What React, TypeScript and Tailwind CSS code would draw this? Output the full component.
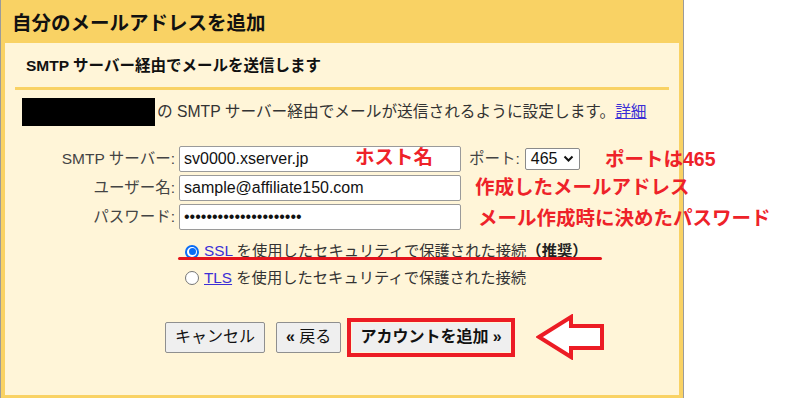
import React from "react";

const FONT = "font-['Liberation_Sans','Noto_Sans_CJK_JP',sans-serif]";

function Radio({ checked }: { checked?: boolean }) {
  return checked ? (
    <span className="w-[14px] h-[14px] rounded-full border-2 border-[#0a6cf5] bg-white flex items-center justify-center shrink-0">
      <span className="w-[7px] h-[7px] rounded-full bg-[#0a6cf5]" />
    </span>
  ) : (
    <span className="w-[14px] h-[14px] rounded-full border border-[#767676] bg-white shrink-0" />
  );
}

function Field({ label, children }: { label: string; children: React.ReactNode }) {
  return (
    <div className="flex items-center h-[26px]">
      <div className="w-[172px] text-right text-[15.5px] text-[#444] pr-[2px]">{label}</div>
      {children}
    </div>
  );
}

function TextBox({ value }: { value: string }) {
  return (
    <div className="w-[282px] h-[26px] ml-[2px] bg-white border border-[#9a9a9a] rounded-[2px] flex items-center px-[4px] text-[16px] text-[#111] leading-none overflow-hidden whitespace-nowrap">
      {value}
    </div>
  );
}

export default function App() {
  return (
    <div className={`relative w-[800px] h-[398px] bg-white overflow-hidden ${FONT}`}>
      {/* dialog frame */}
      <div className="w-[684px] h-full bg-[#f9d264] border-l border-r border-[#9b9b9b] flex flex-col">
        <div className="h-[43px] flex items-center pl-[11px] pt-[4px] text-[19.5px] font-bold text-[#111]">
          自分のメールアドレスを追加
        </div>
        <div className="flex-1 mx-[4px] mb-[3px] bg-[#fff5d8] flex flex-col">
          <div className="h-[44px] flex items-center pl-[21px] pt-[2px] text-[15.5px] font-bold text-[#111]">
            SMTP サーバー経由でメールを送信します
          </div>
          <div className="mx-[10px] h-[3px] bg-[#f9d264]" />

          {/* info line */}
          <div className="flex items-center mt-[8px] pl-[17px] h-[28px] text-[15.7px] text-[#333] whitespace-nowrap">
            <div className="w-[133px] h-[28px] bg-black" />
            <span className="ml-[2px]">
              の SMTP サーバー経由でメールが送信されるように設定します。
              <span className="text-[#3b2fd6] underline">詳細</span>
            </span>
          </div>

          {/* form */}
          <div className="flex flex-col gap-[3px] mt-[20px]">
            <Field label="SMTP サーバー:">
              <TextBox value="sv0000.xserver.jp" />
              <span className="ml-[8px] text-[15.5px] text-[#444]">ポート:</span>
              <div className="ml-[5px] w-[55px] h-[22px] bg-white border border-[#8a8a8a] rounded-[2px] flex items-center justify-between px-[5px] text-[16px] text-[#111]">
                465
                <svg width="11" height="8" viewBox="0 0 11 8">
                  <path d="M1.5 1.5 L5.5 5.5 L9.5 1.5" fill="none" stroke="#111" strokeWidth="2" />
                </svg>
              </div>
            </Field>
            <Field label="ユーザー名:">
              <TextBox value="sample@affiliate150.com" />
            </Field>
            <Field label="パスワード:">
              <TextBox value="•••••••••••••••••••••" />
            </Field>
          </div>

          {/* security options */}
          <div className="flex flex-col pl-[180px] mt-[8px] text-[15.3px] text-[#333] whitespace-nowrap">
            <label className="flex items-center gap-[5px] h-[27px]">
              <Radio checked />
              <span>
                <span className="text-[#3b2fd6] underline">SSL</span> を使用したセキュリティで保護された接続
                <span className="font-bold text-[#222]">（推奨）</span>
              </span>
            </label>
            <label className="flex items-center gap-[5px] h-[26px]">
              <Radio />
              <span>
                <span className="text-[#3b2fd6] underline">TLS</span> を使用したセキュリティで保護された接続
              </span>
            </label>
          </div>

          {/* buttons */}
          <div className="flex items-center mt-[23px] pl-[160px] text-[16px] text-[#111]">
            <button className="h-[31px] px-[9px] bg-[#efefef] border border-[#8f8f8f] rounded-[2px]">
              キャンセル
            </button>
            <button className="ml-[11px] h-[31px] px-[9px] bg-[#efefef] border border-[#8f8f8f] rounded-[2px]">
              <span className="font-bold">«</span> 戻る
            </button>
            <div className="ml-[6px] border-[4px] border-[#ec1c24] p-[1px]">
              <button className="h-[29px] px-[8px] bg-[#efefef] font-bold">アカウントを追加 »</button>
            </div>
            <svg className="ml-[21px]" width="70" height="46" viewBox="0 0 70 46">
              <polygon
                points="3,23 35,3 35,12 66,12 66,34 35,34 35,43"
                fill="#fff"
                stroke="#ec1c24"
                strokeWidth="4"
                strokeLinejoin="miter"
              />
            </svg>
          </div>
        </div>
      </div>

      {/* red annotations drawn over the screenshot */}
      <div className="absolute left-[355px] top-[148px] text-[19.5px] font-bold text-[#ee2229] leading-none">ホスト名</div>
      <div className="absolute left-[605px] top-[150px] text-[19.5px] font-bold text-[#ee2229] leading-none">ポートは465</div>
      <div className="absolute left-[475px] top-[178px] text-[19.5px] font-bold text-[#ee2229] leading-none">作成したメールアドレス</div>
      <div className="absolute left-[478px] top-[209px] text-[19.5px] font-bold text-[#ee2229] leading-none">メール作成時に決めたパスワード</div>
      <div className="absolute left-[178px] top-[257px] w-[424px] h-[3px] bg-[#e4141c] rounded-full" />
    </div>
  );
}
